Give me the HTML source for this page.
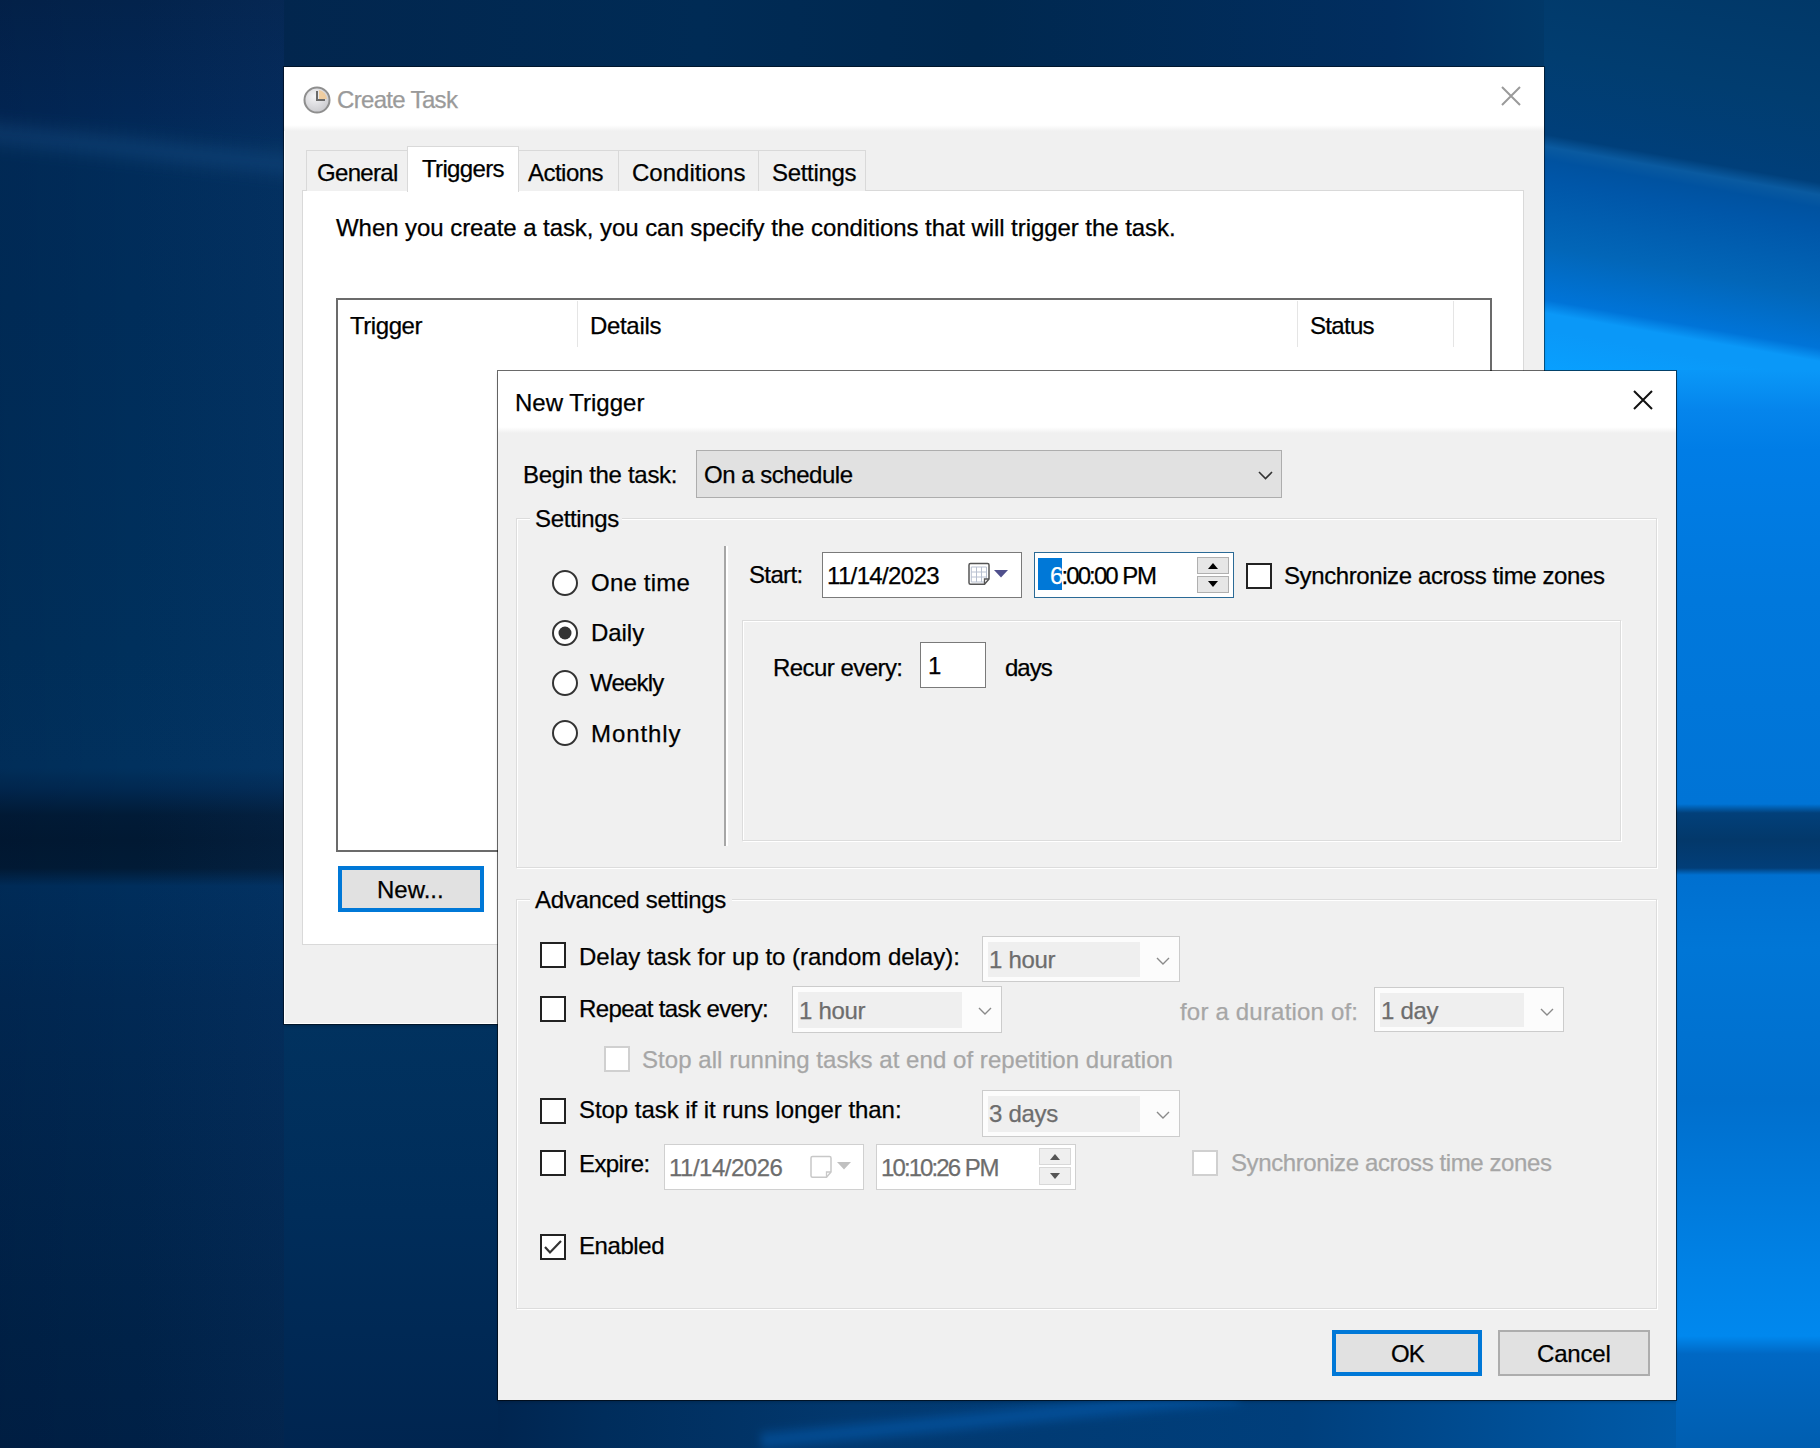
<!DOCTYPE html>
<html><head><meta charset="utf-8">
<style>
html,body{margin:0;padding:0;width:1820px;height:1448px;overflow:hidden;}
body{position:relative;background:#0f3c74;font-family:"Liberation Sans",sans-serif;}
.a{position:absolute;}
.t{position:absolute;font-size:24px;line-height:24px;white-space:nowrap;color:#000;-webkit-text-stroke:0.25px currentColor;}
svg{overflow:visible}
</style></head><body>
<div class="a" style="left:0;top:0;width:1820px;height:1448px;background:#002d5a;"></div>
<div class="a" style="left:0;top:0;width:300px;height:1448px;background:linear-gradient(180deg,#03234c 0px,#022756 112px,#012c5a 150px,#002d5a 300px,#00305c 650px,#01315e 768px,#012850 790px,#011b37 815px,#011933 840px,#011b36 868px,#002e5c 886px,#012954 1000px,#002248 1340px,#002046 1448px);"></div>
<div class="a" style="left:0;top:0;width:300px;height:1448px;background:linear-gradient(90deg,rgba(0,0,20,0.08) 0%,rgba(0,0,0,0) 45%,rgba(40,100,180,0.08) 100%);"></div>
<div class="a" style="left:-40px;top:130px;width:380px;height:40px;background:linear-gradient(180deg,rgba(30,90,150,0) 0%,rgba(30,90,150,0.3) 50%,rgba(30,90,150,0) 100%);transform:rotate(6deg);filter:blur(5px);"></div>
<div class="a" style="left:284px;top:0;width:1260px;height:70px;background:linear-gradient(90deg,#02264e 0%,#002b55 33%,#00284f 55%,#012e60 88%,#013868 100%);"></div>
<div class="a" style="left:1544px;top:0;width:276px;height:372px;background:linear-gradient(190deg,#013868 0px,#013d70 100px,#003f7a 180px,#0a5aa0 192px,#0052a0 205px,#0056a8 225px,#0266b8 290px,#0074d8 343px,#0a98f8 356px,#0a98f8 372px,#08a0ff 414px);"></div>
<div class="a" style="left:1676px;top:370px;width:144px;height:1078px;background:linear-gradient(180deg,#0a98f8 0px,#0585ec 40px,#007de6 80px,#0078dc 230px,#0074d6 434px,#02407a 443px,#03386a 470px,#023e78 498px,#0070d0 505px,#0076d6 580px,#006fcd 730px,#0082e6 900px,#0088ee 966px,#0068c4 984px,#005eb0 1078px);"></div>
<div class="a" style="left:284px;top:1020px;width:216px;height:428px;background:linear-gradient(180deg,#01325f 0%,#002d5a 45%,#002550 100%);"></div>
<div class="a" style="left:498px;top:1398px;width:1178px;height:50px;background:linear-gradient(90deg,#002550 0%,#002d5c 9%,#02386e 30%,#003f7c 68%,#0055a0 93%,#005aa8 100%);"></div>
<div class="a" style="left:760px;top:1405px;width:480px;height:26px;background:linear-gradient(180deg,rgba(0,100,200,0) 0%,rgba(5,100,190,0.55) 50%,rgba(0,100,200,0) 100%);transform:rotate(-5.5deg);filter:blur(4px);"></div>
<div class="a" style="left:284px;top:67px;width:1260px;height:957px;background:#f0f0f0;box-shadow:0 0 0 1px rgba(0,0,0,0.45),0 2px 3px rgba(0,0,0,0.2);"></div>
<div class="a" style="left:284px;top:67px;width:1260px;height:957px;background:transparent;box-shadow:inset 1px -1px 0 #fff;"></div>
<div class="a" style="left:284px;top:67px;width:1260px;height:64px;background:linear-gradient(180deg,#fff 0px,#fff 58px,#f0f0f0 64px);"></div>
<svg class="a" style="left:303px;top:86px" width="28" height="28" viewBox="0 0 28 28"><defs><radialGradient id="cg" cx="40%" cy="35%" r="70%"><stop offset="0" stop-color="#f4f4f6"/><stop offset="1" stop-color="#c8c8cc"/></radialGradient></defs><circle cx="14" cy="14" r="12.5" fill="url(#cg)" stroke="#8e8e8e" stroke-width="2"/><path d="M16 4 A10 10 0 0 1 24 13 L16 13 Z" fill="#f2c890" opacity="0.8"/><path d="M14 5 V14 H22" fill="none" stroke="#6a6a6a" stroke-width="2"/></svg>
<div class="t" style="left:337px;top:88px;letter-spacing:-0.67px;color:#9a9a9a;">Create Task</div>
<svg class="a" style="left:1501px;top:86px" width="20" height="20" viewBox="0 0 20 20"><path d="M1 1 L19 19 M19 1 L1 19" stroke="#9a9a9a" stroke-width="2"/></svg>
<div class="a" style="left:302px;top:190px;width:1222px;height:755px;background:#fff;box-sizing:border-box;border:1px solid #d9d9d9;"></div>
<div class="a" style="left:306px;top:150px;width:102px;height:41px;background:#f0f0f0;box-sizing:border-box;border:1px solid #d9d9d9;border-bottom:none;"></div>
<div class="a" style="left:518px;top:150px;width:101px;height:41px;background:#f0f0f0;box-sizing:border-box;border:1px solid #d9d9d9;border-bottom:none;"></div>
<div class="a" style="left:618px;top:150px;width:141px;height:41px;background:#f0f0f0;box-sizing:border-box;border:1px solid #d9d9d9;border-bottom:none;"></div>
<div class="a" style="left:758px;top:150px;width:108px;height:41px;background:#f0f0f0;box-sizing:border-box;border:1px solid #d9d9d9;border-bottom:none;"></div>
<div class="a" style="left:407px;top:146px;width:112px;height:46px;background:#fff;box-sizing:border-box;border:1px solid #d9d9d9;border-bottom:none;"></div>
<div class="t" style="left:317px;top:161px;letter-spacing:-0.67px;color:#000;">General</div>
<div class="t" style="left:422px;top:157px;letter-spacing:-0.66px;color:#000;">Triggers</div>
<div class="t" style="left:528px;top:161px;letter-spacing:-0.53px;color:#000;">Actions</div>
<div class="t" style="left:632px;top:161px;letter-spacing:0.00px;color:#000;">Conditions</div>
<div class="t" style="left:772px;top:161px;letter-spacing:-0.30px;color:#000;">Settings</div>
<div class="t" style="left:336px;top:216px;letter-spacing:-0.06px;color:#000;">When you create a task, you can specify the conditions that will trigger the task.</div>
<div class="a" style="left:336px;top:298px;width:1156px;height:554px;background:#fff;box-sizing:border-box;border:2px solid #6b6b6b;"></div>
<div class="a" style="left:577px;top:301px;width:1px;height:46px;background:#e5e5e5;"></div>
<div class="a" style="left:1297px;top:301px;width:1px;height:46px;background:#e5e5e5;"></div>
<div class="a" style="left:1453px;top:301px;width:1px;height:46px;background:#e5e5e5;"></div>
<div class="t" style="left:350px;top:314px;letter-spacing:-0.45px;color:#000;">Trigger</div>
<div class="t" style="left:590px;top:314px;letter-spacing:-0.33px;color:#000;">Details</div>
<div class="t" style="left:1310px;top:314px;letter-spacing:-0.70px;color:#000;">Status</div>
<div class="a" style="left:338px;top:866px;width:146px;height:46px;background:#e1e1e1;box-sizing:border-box;border:4px solid #0078d7;"></div>
<div class="t" style="left:377px;top:878px;letter-spacing:0.00px;color:#000;">New...</div>
<div class="a" style="left:498px;top:371px;width:1178px;height:1029px;background:#f0f0f0;box-shadow:0 0 0 1px rgba(0,0,0,0.58),0 2px 3px rgba(0,0,0,0.2);"></div>
<div class="a" style="left:498px;top:371px;width:1178px;height:64px;background:linear-gradient(180deg,#fff 0px,#fff 56px,#f0f0f0 62px);"></div>
<div class="t" style="left:515px;top:391px;letter-spacing:0.00px;color:#000;">New Trigger</div>
<svg class="a" style="left:1633px;top:390px" width="20" height="20" viewBox="0 0 20 20"><path d="M1 1 L19 19 M19 1 L1 19" stroke="#111" stroke-width="2"/></svg>
<div class="t" style="left:523px;top:463px;letter-spacing:-0.31px;color:#000;">Begin the task:</div>
<div class="a" style="left:696px;top:450px;width:586px;height:48px;background:#e1e1e1;box-sizing:border-box;border:1px solid #adadad;"></div>
<div class="t" style="left:704px;top:463px;letter-spacing:-0.48px;color:#000;">On a schedule</div>
<svg class="a" style="left:1258px;top:471px" width="15" height="9" viewBox="0 0 15 9"><path d="M1 1 L7.5 7.5 L14 1" fill="none" stroke="#333" stroke-width="1.6"/></svg>
<div class="a" style="left:516px;top:518px;width:1141px;height:350px;background:transparent;box-sizing:border-box;border:1px solid #dcdcdc;;box-shadow:inset 1px 1px 0 #fff, 1px 1px 0 #fff"></div>
<div class="a" style="left:530px;top:508px;width:92px;height:22px;background:#f0f0f0;"></div>
<div class="t" style="left:535px;top:507px;letter-spacing:-0.36px;color:#000;">Settings</div>
<div class="a" style="left:724px;top:546px;width:2px;height:300px;background:#a6a6a6;"></div>
<div class="a" style="left:726px;top:546px;width:2px;height:300px;background:#ffffff;"></div>
<svg class="a" style="left:552px;top:570px" width="26" height="26" viewBox="0 0 26 26"><circle cx="13" cy="13" r="12" fill="#fff" stroke="#333" stroke-width="2"/></svg>
<svg class="a" style="left:552px;top:620px" width="26" height="26" viewBox="0 0 26 26"><circle cx="13" cy="13" r="12" fill="#fff" stroke="#333" stroke-width="2"/><circle cx="13" cy="13" r="6.5" fill="#333"/></svg>
<svg class="a" style="left:552px;top:670px" width="26" height="26" viewBox="0 0 26 26"><circle cx="13" cy="13" r="12" fill="#fff" stroke="#333" stroke-width="2"/></svg>
<svg class="a" style="left:552px;top:720px" width="26" height="26" viewBox="0 0 26 26"><circle cx="13" cy="13" r="12" fill="#fff" stroke="#333" stroke-width="2"/></svg>
<div class="t" style="left:591px;top:571px;letter-spacing:0.21px;color:#000;">One time</div>
<div class="t" style="left:591px;top:621px;letter-spacing:-0.05px;color:#000;">Daily</div>
<div class="t" style="left:590px;top:671px;letter-spacing:-0.82px;color:#000;">Weekly</div>
<div class="t" style="left:591px;top:722px;letter-spacing:0.90px;color:#000;">Monthly</div>
<div class="t" style="left:749px;top:563px;letter-spacing:-0.64px;color:#000;">Start:</div>
<div class="a" style="left:822px;top:552px;width:200px;height:46px;background:#fff;box-sizing:border-box;border:1px solid #7a7a7a;"></div>
<div class="t" style="left:827px;top:564px;letter-spacing:-0.65px;color:#000;">11/14/2023</div>
<svg class="a" style="left:968px;top:562px" width="22" height="24" viewBox="0 0 22 24"><path d="M3.3 5 H18.5 V17 M3.3 10 H18.5 M3.3 15 H18.5 M3.3 20 H16 M3.3 5 V20 M8.5 5 V20 M13.5 5 V20 M18.5 5 V15" fill="none" stroke="#b8c0d0" stroke-width="1"/><path d="M2.5 1.5 H19.5 Q21 1.5 21 3 V17 L16.5 22.3 H2.5 Q1 22.3 1 20.8 V3 Q1 1.5 2.5 1.5 Z" fill="none" stroke="#555" stroke-width="1.5"/><path d="M21 17 H16.5 V22.3" fill="none" stroke="#555" stroke-width="1.3"/></svg>
<svg class="a" style="left:994px;top:570px" width="15" height="8" viewBox="0 0 15 8"><path d="M0 0 H14 L7 7.5 Z" fill="#4f4f8c"/></svg>
<div class="a" style="left:1034px;top:552px;width:200px;height:46px;background:#fff;box-sizing:border-box;border:1px solid #2a6a96;"></div>
<div class="a" style="left:1038px;top:558px;width:24px;height:32px;background:#0078d7;"></div>
<div class="t" style="left:1050px;top:564px;color:#000;"><span style="letter-spacing:-1.9px"><span style="color:#fff">6</span>:00:00</span><span style="letter-spacing:-1.2px"> PM</span></div>
<div class="a" style="left:1197px;top:557px;width:32px;height:17px;background:#e6e6e6;box-sizing:border-box;border:1px solid #b0b0b0;"></div>
<div class="a" style="left:1197px;top:576px;width:32px;height:17px;background:#e6e6e6;box-sizing:border-box;border:1px solid #b0b0b0;"></div>
<svg class="a" style="left:1207.0px;top:562.0px" width="12" height="8" viewBox="0 0 12 8"><path d="M1 7 L6 1 L11 7 Z" fill="#000"/></svg>
<svg class="a" style="left:1207.0px;top:580.0px" width="12" height="8" viewBox="0 0 12 8"><path d="M1 1 L6 7 L11 1 Z" fill="#000"/></svg>
<svg class="a" style="left:1246px;top:563px" width="26" height="26" viewBox="0 0 26 26"><rect x="1" y="1" width="24" height="24" fill="#fff" stroke="#222" stroke-width="2"/></svg>
<div class="t" style="left:1284px;top:564px;letter-spacing:-0.40px;color:#000;">Synchronize across time zones</div>
<div class="a" style="left:742px;top:620px;width:879px;height:221px;background:transparent;box-sizing:border-box;border:1px solid #dcdcdc;;box-shadow:inset 1px 1px 0 #fff, 1px 1px 0 #fff"></div>
<div class="t" style="left:773px;top:656px;letter-spacing:-0.55px;color:#000;">Recur every:</div>
<div class="a" style="left:920px;top:642px;width:66px;height:46px;background:#fff;box-sizing:border-box;border:1px solid #7a7a7a;"></div>
<div class="t" style="left:928px;top:654px;letter-spacing:0.00px;color:#000;">1</div>
<div class="t" style="left:1005px;top:656px;letter-spacing:-1.00px;color:#000;">days</div>
<div class="a" style="left:516px;top:899px;width:1141px;height:410px;background:transparent;box-sizing:border-box;border:1px solid #dcdcdc;;box-shadow:inset 1px 1px 0 #fff, 1px 1px 0 #fff"></div>
<div class="a" style="left:530px;top:888px;width:202px;height:22px;background:#f0f0f0;"></div>
<div class="t" style="left:535px;top:888px;letter-spacing:-0.30px;color:#000;">Advanced settings</div>
<svg class="a" style="left:540px;top:942px" width="26" height="26" viewBox="0 0 26 26"><rect x="1" y="1" width="24" height="24" fill="#fff" stroke="#222" stroke-width="2"/></svg>
<div class="t" style="left:579px;top:945px;letter-spacing:-0.02px;color:#000;">Delay task for up to (random delay):</div>
<div class="a" style="left:982px;top:936px;width:198px;height:46px;background:#fcfcfc;box-sizing:border-box;border:1px solid #cccccc;"></div>
<div class="a" style="left:988px;top:942px;width:152px;height:35px;background:#efefef;"></div>
<div class="t" style="left:989px;top:948px;letter-spacing:-0.30px;color:#6d6d6d;">1 hour</div>
<svg class="a" style="left:1156px;top:957px" width="15" height="9" viewBox="0 0 15 9"><path d="M1 1 L7 7 L13 1" fill="none" stroke="#8a8a8a" stroke-width="1.4"/></svg>
<svg class="a" style="left:540px;top:996px" width="26" height="26" viewBox="0 0 26 26"><rect x="1" y="1" width="24" height="24" fill="#fff" stroke="#222" stroke-width="2"/></svg>
<div class="t" style="left:579px;top:997px;letter-spacing:-0.61px;color:#000;">Repeat task every:</div>
<div class="a" style="left:792px;top:986px;width:210px;height:47px;background:#fcfcfc;box-sizing:border-box;border:1px solid #cccccc;"></div>
<div class="a" style="left:798px;top:992px;width:164px;height:36px;background:#efefef;"></div>
<div class="t" style="left:799px;top:999px;letter-spacing:-0.30px;color:#6d6d6d;">1 hour</div>
<svg class="a" style="left:978px;top:1007px" width="15" height="9" viewBox="0 0 15 9"><path d="M1 1 L7 7 L13 1" fill="none" stroke="#8a8a8a" stroke-width="1.4"/></svg>
<div class="t" style="left:1180px;top:1000px;letter-spacing:0.19px;color:#a6a6a6;">for a duration of:</div>
<div class="a" style="left:1374px;top:987px;width:190px;height:45px;background:#fcfcfc;box-sizing:border-box;border:1px solid #cccccc;"></div>
<div class="a" style="left:1380px;top:993px;width:144px;height:34px;background:#efefef;"></div>
<div class="t" style="left:1381px;top:999px;letter-spacing:-0.30px;color:#6d6d6d;">1 day</div>
<svg class="a" style="left:1540px;top:1008px" width="15" height="9" viewBox="0 0 15 9"><path d="M1 1 L7 7 L13 1" fill="none" stroke="#8a8a8a" stroke-width="1.4"/></svg>
<svg class="a" style="left:604px;top:1046px" width="26" height="26" viewBox="0 0 26 26"><rect x="1" y="1" width="24" height="24" fill="#fff" stroke="#d0d0d0" stroke-width="2"/></svg>
<div class="t" style="left:642px;top:1048px;letter-spacing:0.05px;color:#a6a6a6;">Stop all running tasks at end of repetition duration</div>
<svg class="a" style="left:540px;top:1098px" width="26" height="26" viewBox="0 0 26 26"><rect x="1" y="1" width="24" height="24" fill="#fff" stroke="#222" stroke-width="2"/></svg>
<div class="t" style="left:579px;top:1098px;letter-spacing:-0.05px;color:#000;">Stop task if it runs longer than:</div>
<div class="a" style="left:982px;top:1090px;width:198px;height:47px;background:#fcfcfc;box-sizing:border-box;border:1px solid #cccccc;"></div>
<div class="a" style="left:988px;top:1096px;width:152px;height:36px;background:#efefef;"></div>
<div class="t" style="left:989px;top:1102px;letter-spacing:-0.30px;color:#6d6d6d;">3 days</div>
<svg class="a" style="left:1156px;top:1111px" width="15" height="9" viewBox="0 0 15 9"><path d="M1 1 L7 7 L13 1" fill="none" stroke="#8a8a8a" stroke-width="1.4"/></svg>
<svg class="a" style="left:540px;top:1150px" width="26" height="26" viewBox="0 0 26 26"><rect x="1" y="1" width="24" height="24" fill="#fff" stroke="#222" stroke-width="2"/></svg>
<div class="t" style="left:579px;top:1152px;letter-spacing:-0.58px;color:#000;">Expire:</div>
<div class="a" style="left:664px;top:1144px;width:200px;height:46px;background:#fff;box-sizing:border-box;border:1px solid #d0d0d0;"></div>
<div class="t" style="left:669px;top:1156px;letter-spacing:-0.49px;color:#6d6d6d;">11/14/2026</div>
<svg class="a" style="left:810px;top:1155px" width="22" height="24" viewBox="0 0 22 24"><path d="M3.3 5 H18.5 V17 M3.3 10 H18.5 M3.3 15 H18.5 M3.3 20 H16 M3.3 5 V20 M8.5 5 V20 M13.5 5 V20 M18.5 5 V15" fill="none" stroke="#ffffff" stroke-width="1"/><path d="M2.5 1.5 H19.5 Q21 1.5 21 3 V17 L16.5 22.3 H2.5 Q1 22.3 1 20.8 V3 Q1 1.5 2.5 1.5 Z" fill="none" stroke="#c8c8c8" stroke-width="1.5"/><path d="M21 17 H16.5 V22.3" fill="none" stroke="#c8c8c8" stroke-width="1.3"/></svg>
<svg class="a" style="left:837px;top:1162px" width="15" height="8" viewBox="0 0 15 8"><path d="M0 0 H14 L7 7.5 Z" fill="#c0c0c0"/></svg>
<div class="a" style="left:876px;top:1144px;width:200px;height:46px;background:#fff;box-sizing:border-box;border:1px solid #d0d0d0;"></div>
<div class="t" style="left:881px;top:1156px;color:#6d6d6d;"><span style="letter-spacing:-1.9px">10:10:26</span><span style="letter-spacing:-1.2px"> PM</span></div>
<div class="a" style="left:1039px;top:1148px;width:32px;height:17px;background:#efefef;box-sizing:border-box;border:1px solid #d8d8d8;"></div>
<div class="a" style="left:1039px;top:1167px;width:32px;height:18px;background:#efefef;box-sizing:border-box;border:1px solid #d8d8d8;"></div>
<svg class="a" style="left:1049.0px;top:1153.0px" width="12" height="8" viewBox="0 0 12 8"><path d="M1 7 L6 1 L11 7 Z" fill="#555"/></svg>
<svg class="a" style="left:1049.0px;top:1171.5px" width="12" height="8" viewBox="0 0 12 8"><path d="M1 1 L6 7 L11 1 Z" fill="#555"/></svg>
<svg class="a" style="left:1192px;top:1150px" width="26" height="26" viewBox="0 0 26 26"><rect x="1" y="1" width="24" height="24" fill="#fff" stroke="#d0d0d0" stroke-width="2"/></svg>
<div class="t" style="left:1231px;top:1151px;letter-spacing:-0.40px;color:#a6a6a6;">Synchronize across time zones</div>
<svg class="a" style="left:540px;top:1234px" width="26" height="26" viewBox="0 0 26 26"><rect x="1" y="1" width="24" height="24" fill="#fff" stroke="#222" stroke-width="2"/><path d="M5 13 L10 18.5 L21 7" fill="none" stroke="#333" stroke-width="2.2"/></svg>
<div class="t" style="left:579px;top:1234px;letter-spacing:-0.42px;color:#000;">Enabled</div>
<div class="a" style="left:1332px;top:1330px;width:150px;height:46px;background:#e1e1e1;box-sizing:border-box;border:4px solid #0078d7;"></div>
<div class="t" style="left:1391px;top:1342px;letter-spacing:-1.00px;color:#000;">OK</div>
<div class="a" style="left:1498px;top:1330px;width:152px;height:46px;background:#e1e1e1;box-sizing:border-box;border:2px solid #adadad;"></div>
<div class="t" style="left:1537px;top:1342px;letter-spacing:-0.20px;color:#000;">Cancel</div>
</body></html>
